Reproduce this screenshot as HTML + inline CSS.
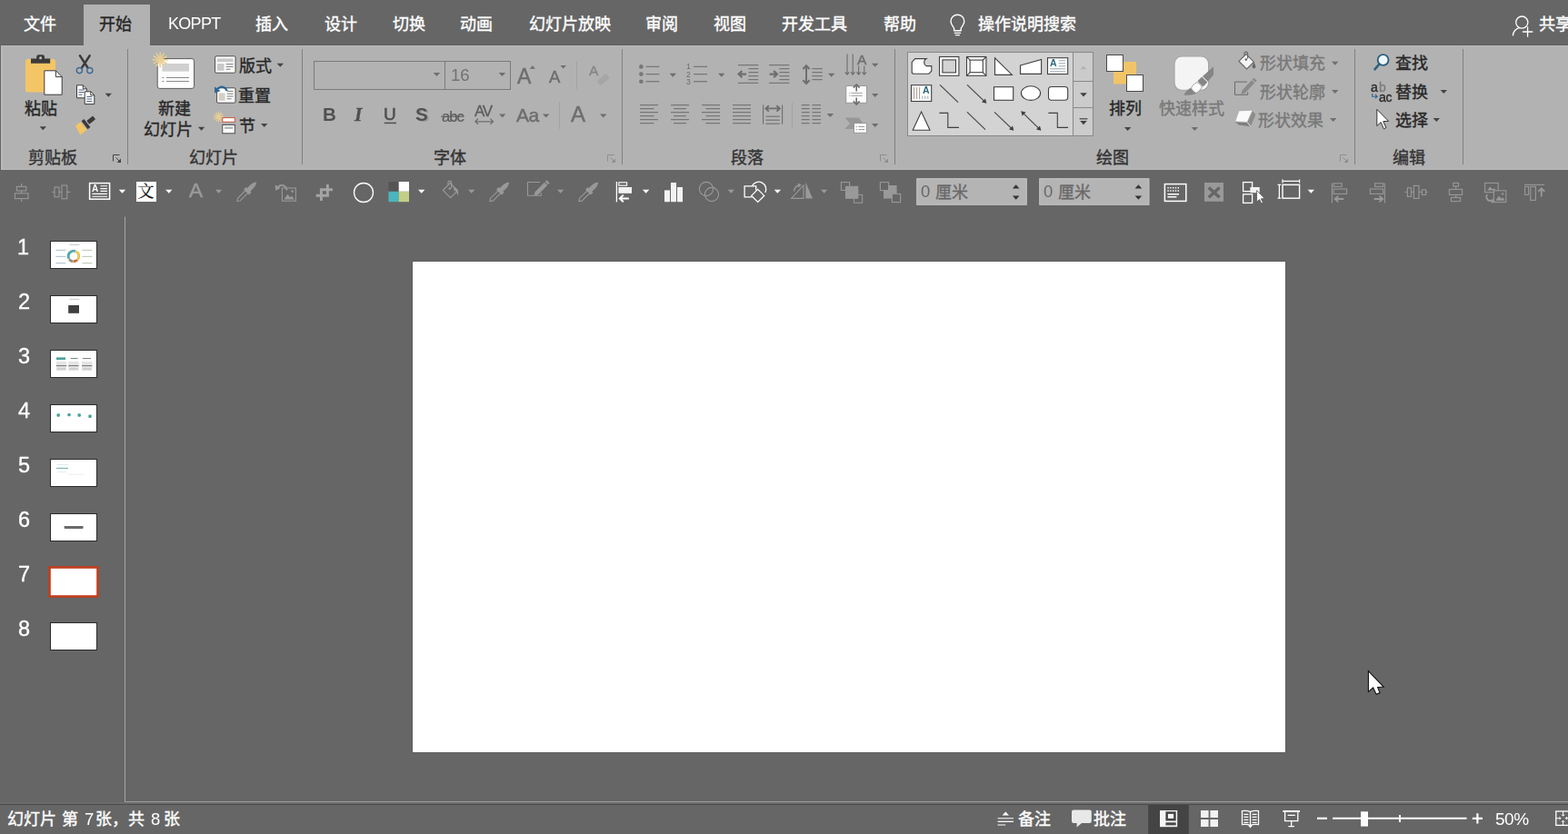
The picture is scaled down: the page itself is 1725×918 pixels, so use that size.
<!DOCTYPE html>
<html lang="zh-CN"><head><meta charset="utf-8"><title>PowerPoint</title>
<style>
html,body{margin:0;padding:0;}
body{width:1725px;height:918px;overflow:hidden;background:#666666;position:relative;font-family:"Liberation Sans",sans-serif;}
#app{position:absolute;left:0;top:0;width:1725px;height:918px;overflow:hidden;background:#666666;}
.abs{position:absolute;}
.cj{position:absolute;overflow:visible;display:block;z-index:3;}
.cj text{font-family:"Liberation Sans","Noto Sans CJK SC",sans-serif;font-size:1000px;}
.lt{position:absolute;line-height:1;white-space:pre;z-index:3;will-change:transform;}
.layer{position:absolute;left:0;top:0;overflow:visible;pointer-events:none;}
#tabbar{position:absolute;left:0;top:0;width:1725px;height:50px;background:#666666;}
#ribbon{position:absolute;left:1px;top:50px;width:1724px;height:137px;background:#b2b2b2;box-shadow:inset 2px 1px 0 #bababa, 0 -1px 0 #606060, 0 1.5px 0 #606060;}
#toolbar{position:absolute;left:0;top:187px;width:1725px;height:50px;background:#666666;}
#slide{position:absolute;left:454px;top:288px;width:960px;height:540px;background:#fff;box-shadow:0 0 0 1px #5e5e5e;}
</style></head><body>
<div id="app">
<div id="tabbar"><div class="abs" style="left:92px;top:5px;width:73px;height:46.2px;background:#b2b2b2;z-index:2"></div><svg class="cj " role="img" aria-label="文件" style="left:26.05px;top:17.46px;width:36.00px;height:18px;fill:#ffffff;stroke:#ffffff;stroke-width:20" viewBox="0 -880 2000 1000"><text x="0" y="0">文件</text></svg><svg class="cj " role="img" aria-label="开始" style="left:108.96px;top:17.37px;width:36.00px;height:18px;fill:#262626;stroke:#262626;stroke-width:20" viewBox="0 -880 2000 1000"><text x="0" y="0">开始</text></svg><svg class="cj " role="img" aria-label="插入" style="left:281.33px;top:17.39px;width:36.00px;height:18px;fill:#ffffff;stroke:#ffffff;stroke-width:20" viewBox="0 -880 2000 1000"><text x="0" y="0">插入</text></svg><svg class="cj " role="img" aria-label="设计" style="left:356.53px;top:17.35px;width:36.00px;height:18px;fill:#ffffff;stroke:#ffffff;stroke-width:20" viewBox="0 -880 2000 1000"><text x="0" y="0">设计</text></svg><svg class="cj " role="img" aria-label="切换" style="left:431.50px;top:17.41px;width:36.00px;height:18px;fill:#ffffff;stroke:#ffffff;stroke-width:20" viewBox="0 -880 2000 1000"><text x="0" y="0">切换</text></svg><svg class="cj " role="img" aria-label="动画" style="left:506.23px;top:17.26px;width:36.00px;height:18px;fill:#ffffff;stroke:#ffffff;stroke-width:20" viewBox="0 -880 2000 1000"><text x="0" y="0">动画</text></svg><svg class="cj " role="img" aria-label="幻灯片放映" style="left:581.76px;top:17.39px;width:90.00px;height:18px;fill:#ffffff;stroke:#ffffff;stroke-width:20" viewBox="0 -880 5000 1000"><text x="0" y="0">幻灯片放映</text></svg><svg class="cj " role="img" aria-label="审阅" style="left:710.01px;top:17.46px;width:36.00px;height:18px;fill:#ffffff;stroke:#ffffff;stroke-width:20" viewBox="0 -880 2000 1000"><text x="0" y="0">审阅</text></svg><svg class="cj " role="img" aria-label="视图" style="left:785.20px;top:17.37px;width:36.00px;height:18px;fill:#ffffff;stroke:#ffffff;stroke-width:20" viewBox="0 -880 2000 1000"><text x="0" y="0">视图</text></svg><svg class="cj " role="img" aria-label="开发工具" style="left:860.36px;top:17.40px;width:72.00px;height:18px;fill:#ffffff;stroke:#ffffff;stroke-width:20" viewBox="0 -880 4000 1000"><text x="0" y="0">开发工具</text></svg><svg class="cj " role="img" aria-label="帮助" style="left:971.60px;top:17.38px;width:36.00px;height:18px;fill:#ffffff;stroke:#ffffff;stroke-width:20" viewBox="0 -880 2000 1000"><text x="0" y="0">帮助</text></svg><svg class="cj " role="img" aria-label="操作说明搜索" style="left:1076.13px;top:17.35px;width:108.00px;height:18px;fill:#ffffff;stroke:#ffffff;stroke-width:20" viewBox="0 -880 6000 1000"><text x="0" y="0">操作说明搜索</text></svg><svg class="cj " role="img" aria-label="共享" style="left:1693.44px;top:17.45px;width:36.00px;height:18px;fill:#ffffff;stroke:#ffffff;stroke-width:20" viewBox="0 -880 2000 1000"><text x="0" y="0">共享</text></svg><span class="lt" style="left:185.20px;top:17.41px;font-size:18px;color:#ffffff;font-weight:normal;font-style:normal;font-family:'Liberation Sans',sans-serif;letter-spacing:-0.7px;">KOPPT</span><svg class="layer " width="1725" height="918" viewBox="0 0 1725 918"><g fill="none" stroke="#fff" stroke-width="1.4" stroke-linecap="round" stroke-linejoin="round"><path d="M1049.6 31.2c-1.2-2.3-3.6-4.2-3.6-7.6a7.4 7.4 0 0 1 14.8 0c0 3.4-2.4 5.3-3.6 7.6v2.6h-7.6z"/><path d="M1050.3 36.4h6.2M1051.4 38.6h4"/></g><g fill="none" stroke="#fff" stroke-width="1.3" stroke-linecap="round"><circle cx="1674.3" cy="24.6" r="6.6"/><path d="M1664.4 38.8c0.6-4.2 3.2-7.2 7-8.2"/><path d="M1675.4 35h10.4M1680.6 29.8v10.4"/></g></svg></div><div id="ribbon"></div><div class="abs" style="left:1px;top:185.5px;width:1724px;height:1.5px;background:#bababa"></div><svg class="cj " role="img" aria-label="剪贴板" style="left:30.60px;top:164.11px;width:54.00px;height:18px;fill:#333333;stroke:#333333;stroke-width:20" viewBox="0 -880 3000 1000"><text x="0" y="0">剪贴板</text></svg><svg class="cj " role="img" aria-label="幻灯片" style="left:208.36px;top:164.07px;width:54.00px;height:18px;fill:#333333;stroke:#333333;stroke-width:20" viewBox="0 -880 3000 1000"><text x="0" y="0">幻灯片</text></svg><svg class="cj " role="img" aria-label="字体" style="left:476.76px;top:164.17px;width:36.00px;height:18px;fill:#333333;stroke:#333333;stroke-width:20" viewBox="0 -880 2000 1000"><text x="0" y="0">字体</text></svg><svg class="cj " role="img" aria-label="段落" style="left:804.01px;top:164.12px;width:36.00px;height:18px;fill:#333333;stroke:#333333;stroke-width:20" viewBox="0 -880 2000 1000"><text x="0" y="0">段落</text></svg><svg class="cj " role="img" aria-label="绘图" style="left:1205.82px;top:164.12px;width:36.00px;height:18px;fill:#333333;stroke:#333333;stroke-width:20" viewBox="0 -880 2000 1000"><text x="0" y="0">绘图</text></svg><svg class="cj " role="img" aria-label="编辑" style="left:1531.62px;top:164.15px;width:36.00px;height:18px;fill:#333333;stroke:#333333;stroke-width:20" viewBox="0 -880 2000 1000"><text x="0" y="0">编辑</text></svg><svg class="cj " role="img" aria-label="粘贴" style="left:26.71px;top:109.59px;width:36.00px;height:18px;fill:#262626;stroke:#262626;stroke-width:20" viewBox="0 -880 2000 1000"><text x="0" y="0">粘贴</text></svg><svg class="cj " role="img" aria-label="新建" style="left:173.66px;top:109.74px;width:36.00px;height:18px;fill:#262626;stroke:#262626;stroke-width:20" viewBox="0 -880 2000 1000"><text x="0" y="0">新建</text></svg><svg class="cj " role="img" aria-label="幻灯片" style="left:157.76px;top:132.57px;width:54.00px;height:18px;fill:#262626;stroke:#262626;stroke-width:20" viewBox="0 -880 3000 1000"><text x="0" y="0">幻灯片</text></svg><svg class="cj " role="img" aria-label="版式" style="left:262.76px;top:62.57px;width:36.00px;height:18px;fill:#262626;stroke:#262626;stroke-width:20" viewBox="0 -880 2000 1000"><text x="0" y="0">版式</text></svg><svg class="cj " role="img" aria-label="重置" style="left:262.36px;top:95.62px;width:36.00px;height:18px;fill:#262626;stroke:#262626;stroke-width:20" viewBox="0 -880 2000 1000"><text x="0" y="0">重置</text></svg><svg class="cj " role="img" aria-label="节" style="left:263.01px;top:129.02px;width:18.00px;height:18px;fill:#262626;stroke:#262626;stroke-width:20" viewBox="0 -880 1000 1000"><text x="0" y="0">节</text></svg><span class="lt" style="left:496.00px;top:73.76px;font-size:18.5px;color:#727272;font-weight:normal;font-style:normal;font-family:'Liberation Sans',sans-serif;">16</span><span class="lt" style="left:568.60px;top:72.76px;font-size:23px;color:#6e6e6e;font-weight:normal;font-style:normal;font-family:'Liberation Sans',sans-serif;-webkit-text-stroke:0.45px #6e6e6e;">A</span><span class="lt" style="left:603.60px;top:76.36px;font-size:18.5px;color:#6e6e6e;font-weight:normal;font-style:normal;font-family:'Liberation Sans',sans-serif;-webkit-text-stroke:0.45px #6e6e6e;">A</span><span class="lt" style="left:648.20px;top:70.43px;font-size:15.5px;color:#858585;font-weight:normal;font-style:normal;font-family:'Liberation Sans',sans-serif;-webkit-text-stroke:0.35px #858585;">A</span><span class="lt" style="left:354.60px;top:116.29px;font-size:20.5px;color:#515151;font-weight:bold;font-style:normal;font-family:'Liberation Sans',sans-serif;">B</span><span class="lt" style="left:390.40px;top:115.80px;font-size:21.5px;color:#515151;font-weight:bold;font-style:italic;font-family:'Liberation Serif',sans-serif;-webkit-text-stroke:0.3px #515151;">I</span><span class="lt" style="left:422.20px;top:116.32px;font-size:19px;color:#515151;font-weight:normal;font-style:normal;font-family:'Liberation Sans',sans-serif;-webkit-text-stroke:0.6px #515151;">U</span><span class="lt" style="left:458.60px;top:117.29px;font-size:20.5px;color:#9a9a9a;font-weight:bold;font-style:normal;font-family:'Liberation Sans',sans-serif;">S</span><span class="lt" style="left:457.20px;top:116.29px;font-size:20.5px;color:#515151;font-weight:bold;font-style:normal;font-family:'Liberation Sans',sans-serif;">S</span><span class="lt" style="left:485.60px;top:120.14px;font-size:16.5px;color:#5c5c5c;font-weight:normal;font-style:normal;font-family:'Liberation Sans',sans-serif;letter-spacing:-0.9px;-webkit-text-stroke:0.2px #5c5c5c;">abc</span><span class="lt" style="left:521.60px;top:114.10px;font-size:17px;color:#5c5c5c;font-weight:normal;font-style:normal;font-family:'Liberation Sans',sans-serif;letter-spacing:-1.3px;-webkit-text-stroke:0.3px #5c5c5c;">AV</span><span class="lt" style="left:568.40px;top:116.14px;font-size:21px;color:#6e6e6e;font-weight:normal;font-style:normal;font-family:'Liberation Sans',sans-serif;letter-spacing:-0.6px;-webkit-text-stroke:0.45px #6e6e6e;">Aa</span><span class="lt" style="left:628.00px;top:113.68px;font-size:24px;color:#6e6e6e;font-weight:normal;font-style:normal;font-family:'Liberation Sans',sans-serif;-webkit-text-stroke:0.5px #6e6e6e;">A</span><svg class="layer " width="1725" height="918" viewBox="0 0 1725 918"><path d="M140.5 54V181" stroke="#808080" stroke-width="1"/><path d="M332.5 54V181" stroke="#808080" stroke-width="1"/><path d="M684.5 54V181" stroke="#808080" stroke-width="1"/><path d="M984.5 54V181" stroke="#808080" stroke-width="1"/><path d="M1490.5 54V181" stroke="#808080" stroke-width="1"/><path d="M1609.5 54V181" stroke="#808080" stroke-width="1"/><g fill="none" stroke="#444" stroke-width="1"><path d="M131.5 170.5H124.5V177.5"/><path d="M127.5 173.5L132.5 178.5"/></g><path d="M133 174.6V179H128.6z" fill="#444"/><g fill="none" stroke="#8e8e8e" stroke-width="1"><path d="M675.5 170.5H668.5V177.5"/><path d="M671.5 173.5L676.5 178.5"/></g><path d="M677 174.6V179H672.6z" fill="#8e8e8e"/><g fill="none" stroke="#8e8e8e" stroke-width="1"><path d="M975.5 170.5H968.5V177.5"/><path d="M971.5 173.5L976.5 178.5"/></g><path d="M977 174.6V179H972.6z" fill="#8e8e8e"/><g fill="none" stroke="#8e8e8e" stroke-width="1"><path d="M1481.5 170.5H1474.5V177.5"/><path d="M1477.5 173.5L1482.5 178.5"/></g><path d="M1483 174.6V179H1478.6z" fill="#8e8e8e"/><rect x="28" y="65" width="33" height="36.5" rx="2.5" fill="#f3c565"/><path d="M34 64.600h6.200v-2a2.400 2.400 0 0 1 2.400-2.400h4a2.400 2.400 0 0 1 2.400 2.400v2h6.200v5.200H34z" fill="#3b3b3b"/><circle cx="44.600" cy="63.800" r="1.500" fill="#c9c2b0"/><path d="M48.8 77.8h12.6l6.8 6.8v19.6H48.8z" fill="#fff" stroke="#3b3b3b" stroke-width="1"/><path d="M61.4 77.8v6.8h6.8" fill="none" stroke="#3b3b3b" stroke-width="1"/><path d="M43.60 139.30h7.4l-3.70 4z" fill="#444"/><g fill="none" stroke-linecap="round"><path d="M88 61.4L96.6 74.6M98.6 61.4L90 74.6" stroke="#3b3b3b" stroke-width="2.600"/><circle cx="87.4" cy="77.6" r="3.1" stroke="#3f6a94" stroke-width="1.400"/><circle cx="98.8" cy="77.6" r="3.1" stroke="#3f6a94" stroke-width="1.400"/></g><path d="M84.5 93.8h6.800000000000001l4 4v10h-10.8z" fill="#fff" stroke="#3b3b3b" stroke-width="1"/><path d="M91.3 93.8v4h4" fill="none" stroke="#3b3b3b" stroke-width="1"/><path d="M86.5 99h6M86.5 101.6h6M86.5 104.2h4" stroke="#4a5f78" stroke-width="1"/><path d="M93.2 100.8h6.6l4 4v9.8h-10.6z" fill="#fff" stroke="#3b3b3b" stroke-width="1"/><path d="M99.8 100.8v4h4" fill="none" stroke="#3b3b3b" stroke-width="1"/><path d="M95.4 106.4h6M95.4 109h6M95.4 111.6h6" stroke="#4a5f78" stroke-width="1"/><path d="M115.60 102.70h7.4l-3.70 4z" fill="#444"/><g transform="translate(94 137) rotate(-38)"><rect x="3.5" y="-2.4" width="8.8" height="4.8" rx="0.8" fill="#3b3b3b"/><rect x="-1.2" y="-5.6" width="3.6" height="11.2" fill="#3b3b3b"/><path d="M-2.4 -5.6h-7.2l-2 11.2h9.2z" fill="#f3c565"/></g><rect x="173.2" y="64.6" width="40.4" height="32.8" rx="2.5" fill="#fdfdfd" stroke="#5a5a5a" stroke-width="1"/><rect x="178.4" y="70" width="29.6" height="8.6" fill="#d0d0d0"/><path d="M178.4 85.5h2M183 85.5h25M178.4 89.5h2M183 89.5h25" stroke="#8a8a8a" stroke-width="1"/><path d="M168.40 65.80L184.00 65.80M169.45 61.90L182.95 69.70M172.30 59.05L180.10 72.55M176.20 58.00L176.20 73.60M180.10 59.05L172.30 72.55M182.95 61.90L169.45 69.70" stroke="#e9cf92" stroke-width="1.7" stroke-linecap="round" opacity="0.95" fill="none"/><path d="M217.90 139.80h7.4l-3.70 4z" fill="#444"/><rect x="236.6" y="61.8" width="22.4" height="18.4" rx="1.4" fill="#fdfdfd" stroke="#4a4a4a" stroke-width="1"/><rect x="239" y="64.4" width="17.6" height="3.8" fill="#c9c9c9"/><rect x="239" y="70" width="7.6" height="7.8" fill="#c9c9c9"/><path d="M248.6 70.6h8M248.6 73.4h8M248.6 76.2h5" stroke="#7a7a7a" stroke-width="1"/><path d="M304.60 69.80h7.4l-3.70 4z" fill="#444"/><rect x="238.6" y="96.8" width="20.4" height="16.4" rx="1.2" fill="#fdfdfd" stroke="#4a4a4a" stroke-width="1"/><rect x="240.6" y="102.4" width="7" height="8.4" fill="#d3cfc9"/><path d="M249.6 100.4h7M249.6 103.2h7M249.6 106h7M249.6 108.8h5" stroke="#7a7a7a" stroke-width="1"/><path d="M249.6 100c-1-3.4-4.6-5.2-8-3.8c-1.7 0.7-2.9 2-3.6 3.6" fill="none" stroke="#2f6593" stroke-width="2.2"/><path d="M236 95.4l0.2 7 6.4-2.4z" fill="#2f6593"/><path d="M235.40 128.60L245.80 128.60M236.10 126.00L245.10 131.20M238.00 124.10L243.20 133.10M240.60 123.40L240.60 133.80M243.20 124.10L238.00 133.10M245.10 126.00L236.10 131.20" stroke="#e9cf92" stroke-width="1.3" stroke-linecap="round" opacity="0.9" fill="none"/><rect x="244.8" y="129.6" width="13.6" height="4.6" fill="#fff" stroke="#c8553d" stroke-width="1"/><rect x="244.8" y="137.4" width="13.6" height="9.4" fill="#fff" stroke="#4a4a4a" stroke-width="1"/><rect x="247" y="139.4" width="9.2" height="2.6" fill="#b4bcbc"/><path d="M287.00 136.00h7.4l-3.70 4z" fill="#444"/><rect x="345.5" y="67.5" width="216" height="31" fill="none" stroke="#7a7a7a" stroke-width="1"/><path d="M489.5 67.5v31" stroke="#7a7a7a" stroke-width="1"/><path d="M476.70 80.00h7.4l-3.70 4z" fill="#6e6e6e"/><path d="M548.70 80.00h7.4l-3.70 4z" fill="#6e6e6e"/><path d="M582.60 75.80h6.4l-3.20 -3.6z" fill="#6e6e6e"/><path d="M616.50 72.00h6.4l-3.20 3.6z" fill="#6e6e6e"/><path d="M634.5 67.5V98" stroke="#a3a3a3" stroke-width="1"/><g transform="translate(663.5 87.5) rotate(-40)"><rect x="-6.5" y="-3" width="13" height="6.4" rx="1" fill="#a6a6a6"/></g><path d="M422.6 135.4h13.4" stroke="#515151" stroke-width="1.5"/><path d="M485 128.2h25.6" stroke="#5c5c5c" stroke-width="1.1"/><path d="M523 133.800h19.400M526 130.800l-3.200 3 3.200 3M539.400 130.800l3.200 3-3.200 3" fill="none" stroke="#6e6e6e" stroke-width="1.2"/><path d="M549.00 125.50h7.4l-3.70 4z" fill="#6e6e6e"/><path d="M597.00 125.50h7.4l-3.70 4z" fill="#6e6e6e"/><path d="M615.5 112.5V142" stroke="#a3a3a3" stroke-width="1"/><path d="M660.00 125.50h7.4l-3.70 4z" fill="#6e6e6e"/></svg><span class="lt" style="left:755.40px;top:69.40px;font-size:8.6px;color:#6e6e6e;font-weight:normal;font-style:normal;font-family:'Liberation Sans',sans-serif;">1</span><span class="lt" style="left:755.40px;top:77.60px;font-size:8.6px;color:#6e6e6e;font-weight:normal;font-style:normal;font-family:'Liberation Sans',sans-serif;">2</span><span class="lt" style="left:755.40px;top:85.70px;font-size:8.6px;color:#6e6e6e;font-weight:normal;font-style:normal;font-family:'Liberation Sans',sans-serif;">3</span><span class="lt" style="left:942.60px;top:57.63px;font-size:15.5px;color:#6e6e6e;font-weight:normal;font-style:normal;font-family:'Liberation Sans',sans-serif;-webkit-text-stroke:0.4px #6e6e6e;">A</span><span class="lt" style="left:1155.20px;top:64.47px;font-size:10.5px;color:#2b667a;font-weight:bold;font-style:normal;font-family:'Liberation Sans',sans-serif;">A</span><span class="lt" style="left:1014.80px;top:94.47px;font-size:10.5px;color:#2b667a;font-weight:bold;font-style:normal;font-family:'Liberation Sans',sans-serif;">A</span><svg class="cj " role="img" aria-label="排列" style="left:1219.54px;top:109.95px;width:36.00px;height:18px;fill:#262626;stroke:#262626;stroke-width:20" viewBox="0 -880 2000 1000"><text x="0" y="0">排列</text></svg><svg class="cj " role="img" aria-label="快速样式" style="left:1275.00px;top:109.99px;width:72.00px;height:18px;fill:#787878;stroke:#787878;stroke-width:20" viewBox="0 -880 4000 1000"><text x="0" y="0">快速样式</text></svg><svg class="cj " role="img" aria-label="形状填充" style="left:1386.03px;top:60.28px;width:72.00px;height:18px;fill:#787878;stroke:#787878;stroke-width:20" viewBox="0 -880 4000 1000"><text x="0" y="0">形状填充</text></svg><svg class="cj " role="img" aria-label="形状轮廓" style="left:1386.03px;top:92.00px;width:72.00px;height:18px;fill:#787878;stroke:#787878;stroke-width:20" viewBox="0 -880 4000 1000"><text x="0" y="0">形状轮廓</text></svg><svg class="cj " role="img" aria-label="形状效果" style="left:1384.33px;top:122.65px;width:72.00px;height:18px;fill:#787878;stroke:#787878;stroke-width:20" viewBox="0 -880 4000 1000"><text x="0" y="0">形状效果</text></svg><svg class="cj " role="img" aria-label="查找" style="left:1535.05px;top:60.34px;width:36.00px;height:18px;fill:#262626;stroke:#262626;stroke-width:20" viewBox="0 -880 2000 1000"><text x="0" y="0">查找</text></svg><span class="lt" style="left:1508.40px;top:88.56px;font-size:14px;color:#2a2a2a;font-weight:normal;font-style:normal;font-family:'Liberation Sans',sans-serif;-webkit-text-stroke:0.35px #2a2a2a;">a</span><span class="lt" style="left:1517.00px;top:88.56px;font-size:14px;color:#7c7c7c;font-weight:normal;font-style:normal;font-family:'Liberation Sans',sans-serif;-webkit-text-stroke:0.3px #7c7c7c;">b</span><span class="lt" style="left:1516.60px;top:99.56px;font-size:14px;color:#2a2a2a;font-weight:normal;font-style:normal;font-family:'Liberation Sans',sans-serif;letter-spacing:-0.3px;-webkit-text-stroke:0.35px #2a2a2a;">ac</span><svg class="cj " role="img" aria-label="替换" style="left:1534.93px;top:92.01px;width:36.00px;height:18px;fill:#262626;stroke:#262626;stroke-width:20" viewBox="0 -880 2000 1000"><text x="0" y="0">替换</text></svg><svg class="cj " role="img" aria-label="选择" style="left:1534.89px;top:122.67px;width:36.00px;height:18px;fill:#262626;stroke:#262626;stroke-width:20" viewBox="0 -880 2000 1000"><text x="0" y="0">选择</text></svg><svg class="layer " width="1725" height="918" viewBox="0 0 1725 918"><circle cx="705.4" cy="73.4" r="2.3" fill="#767676"/><path d="M710.6 73.4H725.4" stroke="#767676" stroke-width="1.25"/><circle cx="705.4" cy="81.6" r="2.3" fill="#767676"/><path d="M710.6 81.6H725.4" stroke="#767676" stroke-width="1.25"/><circle cx="705.4" cy="89.7" r="2.3" fill="#767676"/><path d="M710.6 89.7H725.4" stroke="#767676" stroke-width="1.25"/><path d="M736.60 80.70h7.4l-3.70 4z" fill="#6e6e6e"/><path d="M763 73.4H778" stroke="#767676" stroke-width="1.25"/><path d="M763 81.6H778" stroke="#767676" stroke-width="1.25"/><path d="M763 89.7H778" stroke="#767676" stroke-width="1.25"/><path d="M790.00 80.70h7.4l-3.70 4z" fill="#6e6e6e"/><path d="M812 71.6H834.2" stroke="#767676" stroke-width="1.25"/><path d="M823.4 75.6H834.2" stroke="#767676" stroke-width="1.25"/><path d="M823.4 79.6H834.2" stroke="#767676" stroke-width="1.25"/><path d="M823.4 83.6H834.2" stroke="#767676" stroke-width="1.25"/><path d="M823.4 87.6H834.2" stroke="#767676" stroke-width="1.25"/><path d="M812 91.4H834.2" stroke="#767676" stroke-width="1.25"/><path d="M821 81.6h-8M816.4 78l-3.8 3.6 3.8 3.6" fill="none" stroke="#6e6e6e" stroke-width="2.2"/><path d="M846 71.6H868.4" stroke="#767676" stroke-width="1.25"/><path d="M857.4 75.6H868.4" stroke="#767676" stroke-width="1.25"/><path d="M857.4 79.6H868.4" stroke="#767676" stroke-width="1.25"/><path d="M857.4 83.6H868.4" stroke="#767676" stroke-width="1.25"/><path d="M857.4 87.6H868.4" stroke="#767676" stroke-width="1.25"/><path d="M846 91.4H868.4" stroke="#767676" stroke-width="1.25"/><path d="M846.6 81.6h8M851.2 78l3.8 3.6-3.8 3.6" fill="none" stroke="#6e6e6e" stroke-width="2.2"/><path d="M887 72.4V91.8M883.4 76l3.6-3.8 3.6 3.8M883.4 88.2l3.6 3.8 3.6-3.8" fill="none" stroke="#6e6e6e" stroke-width="2"/><path d="M893.4 75.6H904.8" stroke="#767676" stroke-width="1.25"/><path d="M893.4 79.6H904.8" stroke="#767676" stroke-width="1.25"/><path d="M893.4 83.6H904.8" stroke="#767676" stroke-width="1.25"/><path d="M893.4 87.6H904.8" stroke="#767676" stroke-width="1.25"/><path d="M911.00 80.70h7.4l-3.70 4z" fill="#6e6e6e"/><path d="M932 59.4V82M929.8 79.4l2.2 2.8 2.2-2.8" fill="none" stroke="#6e6e6e" stroke-width="1.1"/><path d="M938.2 59.4V82M936.0 79.4l2.2 2.8 2.2-2.8" fill="none" stroke="#6e6e6e" stroke-width="1.1"/><path d="M944.6 72.5V82M942.4 79.4l2.2 2.8 2.2-2.8" fill="none" stroke="#6e6e6e" stroke-width="1.1"/><path d="M950.8 72.5V82M948.5999999999999 79.4l2.2 2.8 2.2-2.8" fill="none" stroke="#6e6e6e" stroke-width="1.1"/><path d="M959.00 69.70h7.4l-3.70 4z" fill="#6e6e6e"/><rect x="930.8" y="94.6" width="22.8" height="18.6" fill="#fbfbfb" stroke="#8a8a8a" stroke-width="0.8"/><path d="M942.2 93.4v7.2M938.8 96.6l3.4-3.6 3.4 3.6M942.2 114.6v-7.2M938.8 111.4l3.4 3.6 3.4-3.6" fill="none" stroke="#6e6e6e" stroke-width="1.6"/><path d="M936.4 102.4H948.8" stroke="#9a9a9a" stroke-width="0.9"/><path d="M936.4 105.4H948.8" stroke="#9a9a9a" stroke-width="0.9"/><path d="M934.2 102.4H935.4" stroke="#9a9a9a" stroke-width="0.9"/><path d="M934.2 105.4H935.4" stroke="#9a9a9a" stroke-width="0.9"/><path d="M959.00 103.00h7.4l-3.70 4z" fill="#6e6e6e"/><path d="M929.4 129.4h15.4l4.6 6.3-4.6 6.3h-15.4l5.6-6.3z" fill="#979797"/><rect x="939.6" y="135.6" width="14" height="10.6" fill="#fbfbfb" stroke="#8a8a8a" stroke-width="0.8"/><path d="M944.4 139.4H951" stroke="#8a8a8a" stroke-width="0.9"/><path d="M944.4 142.6H951" stroke="#8a8a8a" stroke-width="0.9"/><path d="M941.8 139.4H943" stroke="#8a8a8a" stroke-width="0.9"/><path d="M941.8 142.6H943" stroke="#8a8a8a" stroke-width="0.9"/><path d="M959.00 136.00h7.4l-3.70 4z" fill="#6e6e6e"/><path d="M704 115.6H724" stroke="#767676" stroke-width="1.25"/><path d="M704 119.6H719.4" stroke="#767676" stroke-width="1.25"/><path d="M704 123.6H724" stroke="#767676" stroke-width="1.25"/><path d="M704 127.6H719.4" stroke="#767676" stroke-width="1.25"/><path d="M704 131.6H724" stroke="#767676" stroke-width="1.25"/><path d="M704 135.6H719.4" stroke="#767676" stroke-width="1.25"/><path d="M738 115.6H758" stroke="#767676" stroke-width="1.25"/><path d="M741 119.6H755" stroke="#767676" stroke-width="1.25"/><path d="M738 123.6H758" stroke="#767676" stroke-width="1.25"/><path d="M741 127.6H755" stroke="#767676" stroke-width="1.25"/><path d="M738 131.6H758" stroke="#767676" stroke-width="1.25"/><path d="M741 135.6H755" stroke="#767676" stroke-width="1.25"/><path d="M772 115.6H792" stroke="#767676" stroke-width="1.25"/><path d="M776.4 119.6H792" stroke="#767676" stroke-width="1.25"/><path d="M772 123.6H792" stroke="#767676" stroke-width="1.25"/><path d="M776.4 127.6H792" stroke="#767676" stroke-width="1.25"/><path d="M772 131.6H792" stroke="#767676" stroke-width="1.25"/><path d="M776.4 135.6H792" stroke="#767676" stroke-width="1.25"/><path d="M806 115.6H826" stroke="#767676" stroke-width="1.25"/><path d="M806 119.6H826" stroke="#767676" stroke-width="1.25"/><path d="M806 123.6H826" stroke="#767676" stroke-width="1.25"/><path d="M806 127.6H826" stroke="#767676" stroke-width="1.25"/><path d="M806 131.6H826" stroke="#767676" stroke-width="1.25"/><path d="M806 135.6H826" stroke="#767676" stroke-width="1.25"/><path d="M839.6 115.4V136.8M860.6 115.4V136.8" stroke="#6e6e6e" stroke-width="1.1"/><path d="M842.4 119.4h15.4M845.8 116.2l-3.4 3.2 3.4 3.2M854.4 116.2l3.4 3.2-3.4 3.2" fill="none" stroke="#6e6e6e" stroke-width="1.9"/><path d="M842.4 128.2H857.8" stroke="#767676" stroke-width="1.25"/><path d="M842.4 132.2H857.8" stroke="#767676" stroke-width="1.25"/><path d="M842.4 136.2H857.8" stroke="#767676" stroke-width="1.25"/><path d="M871.5 112.5V142" stroke="#a3a3a3" stroke-width="1"/><path d="M881.8 115.6H890.6" stroke="#767676" stroke-width="1.25"/><path d="M893.4 115.6H903" stroke="#767676" stroke-width="1.25"/><path d="M881.8 119.6H890.6" stroke="#767676" stroke-width="1.25"/><path d="M893.4 119.6H903" stroke="#767676" stroke-width="1.25"/><path d="M881.8 123.6H890.6" stroke="#767676" stroke-width="1.25"/><path d="M893.4 123.6H903" stroke="#767676" stroke-width="1.25"/><path d="M881.8 127.6H890.6" stroke="#767676" stroke-width="1.25"/><path d="M893.4 127.6H903" stroke="#767676" stroke-width="1.25"/><path d="M881.8 131.6H890.6" stroke="#767676" stroke-width="1.25"/><path d="M893.4 131.6H903" stroke="#767676" stroke-width="1.25"/><path d="M881.8 135.6H890.6" stroke="#767676" stroke-width="1.25"/><path d="M893.4 135.6H903" stroke="#767676" stroke-width="1.25"/><path d="M909.70 125.00h7.4l-3.70 4z" fill="#6e6e6e"/><rect x="998.5" y="57.5" width="204" height="92" fill="#d3d3d3" stroke="#888888" stroke-width="1"/><rect x="1180.5" y="57.5" width="22" height="92" fill="#cbcbcb" stroke="#888888" stroke-width="1"/><path d="M1180.5 89.5h22M1180.5 118.5h22" stroke="#888888" stroke-width="1"/><path d="M1188.30 76.20h7.4l-3.70 -3.6z" fill="#b4b4b4"/><path d="M1188.20 102.30h7.6l-3.80 4.2z" fill="#404040"/><path d="M1187.6 130.8h8.8" stroke="#404040" stroke-width="1.2"/><path d="M1188.20 133.10h7.6l-3.80 4.2z" fill="#404040"/><path d="M1006.6 64.6h12.4a4.6 4.6 0 0 0 0 8h5.8v5.6l-3 3h-17.4l-1.2-1.2v-11.6z" fill="#fff" stroke="#404040" stroke-width="1.1" stroke-linejoin="miter"/><rect x="1033.5" y="62.5" width="21.4" height="20.8" fill="#fff" stroke="#404040" stroke-width="1.1" stroke-linejoin="miter"/><rect x="1036.9" y="65.9" width="14.6" height="14" fill="#d3d3d3" stroke="#404040" stroke-width="1.1"/><rect x="1063.5" y="62.5" width="21.4" height="20.8" fill="#fff" stroke="#404040" stroke-width="1.1" stroke-linejoin="miter"/><rect x="1067.1" y="66.1" width="14.2" height="13.6" fill="#fff" stroke="#404040" stroke-width="1.1" stroke-linejoin="miter"/><path d="M1063.5 62.5l3.6 3.6M1084.9 62.5l-3.6 3.6M1063.5 83.3l3.6-3.6M1084.9 83.3l-3.6-3.6" fill="none" stroke="#404040" stroke-width="1.1"/><path d="M1094.5 63.8V82.4H1113.4z" fill="#fff" stroke="#404040" stroke-width="1.1" stroke-linejoin="miter"/><path d="M1122.5 72L1145.6 65.4V81.4H1122.5z" fill="#fff" stroke="#404040" stroke-width="1.1" stroke-linejoin="miter"/><rect x="1152.5" y="63.7" width="22.2" height="17.8" fill="#fff" stroke="#404040" stroke-width="1.1" stroke-linejoin="miter"/><path d="M1164.6 66.8h7.6M1164.6 69.8h7.6M1164.6 72.8h7.6M1155 75.8h17.2M1155 78.8h17.2" stroke="#8c9aa0" stroke-width="0.9"/><rect x="1002.5" y="93.7" width="22.2" height="17.8" fill="#fff" stroke="#404040" stroke-width="1.1" stroke-linejoin="miter"/><path d="M1005.6 96v13M1008.6 96v13M1011.6 96v13" stroke="#9a8c80" stroke-width="0.9"/><path d="M1014.8 105.6v3.6M1017.8 105.6v3.6M1020.8 105.6v3.6" stroke="#8c9aa0" stroke-width="0.9"/><path d="M1034 93.4L1054 112.6" fill="none" stroke="#404040" stroke-width="1.1"/><path d="M1064 93.4L1084.4 112.8" fill="none" stroke="#404040" stroke-width="1.1"/><path d="M1085.4 113.8l-5.4-1.4 4-4z" fill="#404040"/><rect x="1093.5" y="95.7" width="21.2" height="14.6" fill="#fff" stroke="#404040" stroke-width="1.1" stroke-linejoin="miter"/><ellipse cx="1134" cy="102.6" rx="10.6" ry="7.8" fill="#fff" stroke="#404040" stroke-width="1.1" stroke-linejoin="miter"/><rect x="1153.5" y="95.5" width="21.2" height="14.8" rx="3.2" fill="#fff" stroke="#404040" stroke-width="1.1" stroke-linejoin="miter"/><path d="M1013.6 123L1023 143.2H1004.2z" fill="#fff" stroke="#404040" stroke-width="1.1" stroke-linejoin="miter"/><path d="M1033.4 124.4h9.4v16h12.2" fill="none" stroke="#404040" stroke-width="1.1"/><path d="M1064 123.4L1084 142.6" fill="none" stroke="#404040" stroke-width="1.1"/><path d="M1094 123.4L1114.4 142.8" fill="none" stroke="#404040" stroke-width="1.1"/><path d="M1115.4 143.8l-5.4-1.4 4-4z" fill="#404040"/><path d="M1124.4 123.4L1144.4 142.8" fill="none" stroke="#404040" stroke-width="1.1"/><path d="M1145.4 143.8l-5.4-1.4 4-4z" fill="#404040"/><path d="M1123.2 122.2l5.4 1.4-4 4z" fill="#404040"/><path d="M1153.4 124.4h9.9v16h11.8" fill="none" stroke="#404040" stroke-width="1.1"/><rect x="1225" y="68" width="25" height="24.6" fill="#f1c468"/><rect x="1217.5" y="60.5" width="18" height="18" fill="#fff" stroke="#4a4a4a" stroke-width="1"/><rect x="1239.5" y="82.5" width="18" height="18" fill="#fff" stroke="#4a4a4a" stroke-width="1"/><path d="M1236.90 140.00h7.4l-3.70 4z" fill="#444"/><rect x="1292" y="62" width="37.6" height="37.2" rx="8" fill="#f4f4f4" stroke="#a2a2a2" stroke-width="1.1"/><path d="M1302.300 104.700Q1304.600 99.600 1309.900 96.700L1316.100 102.900Q1309 105.400 1302.300 104.700Z" fill="#858585"/><g transform="translate(1316.5 96.3) rotate(-45)"><rect x="-5.400" y="-4.500" width="10.400" height="9" rx="3" fill="#fbfbfb" stroke="#8f8f8f" stroke-width="0.800"/><rect x="5.600" y="-4.300" width="6.800" height="8.600" fill="#858585"/><path d="M13.300 -4.100L29.400 -3.200L22.960 3.200L13.300 4.100z" fill="#858585"/></g><path d="M1310.60 140.00h7.4l-3.70 4z" fill="#6e6e6e"/><g fill="none" stroke="#6a6a6a" stroke-width="1.2"><path d="M1363 67.400l7.800-7.800 8.600 8.600-7.800 7.800z" fill="#f4f4f4"/><path d="M1369 61.600v-2.600a1.800 1.800 0 0 1 3.600 0v5.600"/></g><circle cx="1370.800" cy="65.600" r="1.300" fill="#6a6a6a"/><path d="M1379.400 68.200c1 2.400 2 3.600 2 5.200a1.900 1.900 0 0 1-3.800 0c0-1.600 1-2.800 1.800-5.200z" fill="#6a6a6a"/><path d="M1465.00 67.80h7.4l-3.70 4z" fill="#6e6e6e"/><path d="M1372 90.100h-13.500v14.200h14.200v-3" fill="none" stroke="#6a6a6a" stroke-width="1"/><g transform="translate(1365.400 104) rotate(-47)"><path d="M0 0l4-2.200h15.400v4.400h-15.400z" fill="#8a8a8a"/><rect x="20.400" y="-2.200" width="2.600" height="4.400" fill="#8a8a8a"/></g><path d="M1465.00 98.90h7.4l-3.70 4z" fill="#6e6e6e"/><path d="M1377.500 121.400L1381.300 126.300L1375.900 139.300L1372 134.400Z" fill="#8c8c8c"/><path d="M1359 133.900L1372 134.400L1375.900 139.300L1362.600 137.400Z" fill="#7e7e7e"/><path d="M1363.600 121.900L1376.700 121.400a0.800 0.800 0 0 1 0.800 1.100L1372.300 134a0.800 0.800 0 0 1-0.800 0.400L1359.800 133.900a0.800 0.800 0 0 1-0.600-1.100L1362.800 122.400z" fill="#fafafa" stroke="#a8a8a8" stroke-width="0.600"/><path d="M1372.200 134.600L1375.700 139" stroke="#f0f0f0" stroke-width="0.900"/><path d="M1463.00 129.90h7.4l-3.70 4z" fill="#6e6e6e"/><circle cx="1521.600" cy="66" r="5.900" fill="#eef6fb" stroke="#2c5f7c" stroke-width="1.900"/><path d="M1517.400 70.600l-5 5.800" stroke="#2c5f7c" stroke-width="2.400" stroke-linecap="round"/><path d="M1509.600 103v3.200h5.400M1512.800 104l2.400 2.200-2.400 2.200" fill="none" stroke="#2f6593" stroke-width="1.100"/><path d="M1584.60 98.90h7.4l-3.70 4z" fill="#444"/><path d="M1514.800 120.400v18.200l4.300-4 3.200 7.200 2.600-1.200-3.100-7 5.800-0.300z" fill="#fff" stroke="#333" stroke-width="1" stroke-linejoin="round"/><path d="M1576.60 129.90h7.4l-3.70 4z" fill="#444"/></svg><div id="toolbar"></div><span class="lt" style="left:101.00px;top:202.92px;font-size:10px;color:#fff;font-weight:bold;font-style:normal;font-family:'Liberation Sans',sans-serif;">A</span><svg class="cj " role="img" aria-label="文" style="left:151.40px;top:201.35px;width:18.60px;height:18.6px;fill:#111;stroke:#111;stroke-width:6" viewBox="0 -880 1000 1000"><text x="0" y="0" style="font-family:'Liberation Serif','Noto Serif CJK SC',serif;">文</text></svg><span class="lt" style="left:207.80px;top:199.11px;font-size:22.5px;color:#999999;font-weight:normal;font-style:normal;font-family:'Liberation Sans',sans-serif;-webkit-text-stroke:0.65px #999999;">A</span><span class="lt" style="left:1013.30px;top:202.36px;font-size:18.5px;color:#686868;font-weight:normal;font-style:normal;font-family:'Liberation Sans',sans-serif;">0</span><svg class="cj " role="img" aria-label="厘米" style="left:1029.35px;top:202.29px;width:36.00px;height:18px;fill:#686868;stroke:#686868;stroke-width:20" viewBox="0 -880 2000 1000"><text x="0" y="0">厘米</text></svg><span class="lt" style="left:1148.30px;top:202.36px;font-size:18.5px;color:#686868;font-weight:normal;font-style:normal;font-family:'Liberation Sans',sans-serif;">0</span><svg class="cj " role="img" aria-label="厘米" style="left:1164.35px;top:202.29px;width:36.00px;height:18px;fill:#686868;stroke:#686868;stroke-width:20" viewBox="0 -880 2000 1000"><text x="0" y="0">厘米</text></svg><svg class="layer " width="1725" height="918" viewBox="0 0 1725 918"><path d="M23.6 202V222" stroke="#999999" stroke-width="1.1"/><rect x="18.4" y="205.4" width="10.40" height="4.60" fill="#666666" stroke="#999999" stroke-width="1.1"/><rect x="16.4" y="212.8" width="14.60" height="5.80" fill="#666666" stroke="#999999" stroke-width="1.1"/><path d="M57.4 211.4H77.4" stroke="#999999" stroke-width="1.1"/><rect x="60" y="206" width="5.00" height="10.80" fill="#666666" stroke="#999999" stroke-width="1.1"/><rect x="68" y="204" width="5.80" height="14.80" fill="#666666" stroke="#999999" stroke-width="1.1"/><rect x="98.6" y="201.6" width="22.00" height="17.60" fill="none" stroke="#fff" stroke-width="1.5"/><path d="M110.400 204.800h7.600M110.400 207.600h7.600M110.400 210.400h7.600M101.400 213.400h16.600M101.400 216.200h16.600" stroke="#fff" stroke-width="1.1"/><path d="M130.80 208.80h7.4l-3.70 4z" fill="#fff"/><rect x="150" y="200" width="22" height="22" fill="#fff"/><path d="M182.10 208.80h7.4l-3.70 4z" fill="#fff"/><path d="M236.90 208.80h7.4l-3.70 4z" fill="#999999"/><g transform="translate(260.6 221.8) rotate(-45)" fill="none" stroke="#999999" stroke-width="1.1"><path d="M0.500 0l2.600-1.900h13.400v3.800h-13.400z"/><rect x="15.200" y="-3.600" width="2.600" height="7.200" fill="#999999"/><path d="M17.800 -2h4.600c3.400 0 5.400 0.400 7 2c-1.600 1.600-3.600 2-7 2h-4.600z" fill="#999999"/></g><rect x="310.4" y="207" width="15.00" height="14.20" fill="none" stroke="#999999" stroke-width="1.1"/><path d="M312.400 219.400l4-5.600 2.800 3.400 1.800-1.800 2.800 4z" fill="#999999"/><circle cx="321.600" cy="210.600" r="1.300" fill="#999999"/><path d="M315.400 209.600c0-3.800-3-6-6.200-5.600c-2 0.300-3.400 1.400-4.200 3" fill="none" stroke="#999999" stroke-width="1.800"/><path d="M302.600 203.400l0.600 6.400 5.600-2.800z" fill="#999999"/><path d="M353.400 207.200V220.900M351.900 208.700H366.100M360.400 202.900V216.600M347.700 215.200H361.900" fill="none" stroke="#a4a4a4" stroke-width="2.900"/><circle cx="400" cy="212" r="10.500" fill="none" stroke="#fff" stroke-width="1.300"/><rect x="427.400" y="200" width="11.300" height="10.800" fill="#555555"/><rect x="438.700" y="200" width="11.300" height="10.800" fill="#ffffff"/><rect x="427.400" y="210.800" width="11.300" height="11.400" fill="#4bb4bd"/><rect x="438.700" y="210.800" width="11.300" height="11.400" fill="#c3cf86"/><path d="M460.00 208.80h7.4l-3.70 4z" fill="#fff"/><g fill="none" stroke="#999999" stroke-width="1.200"><path d="M487.400 209.400l7.800-7.800 8.200 8.200-7.800 7.800z"/><path d="M493 203.800v-2.800a1.800 1.800 0 0 1 3.600 0v6"/></g><circle cx="494.800" cy="207.600" r="1.300" fill="#999999"/><path d="M499 205.400c3 1 4.800 3 5.200 6.600l-0.400 3.800c-0.600-3.400-2.400-5.600-4.600-6.800z" fill="#999999"/><path d="M515.00 208.80h7.4l-3.70 4z" fill="#999999"/><g transform="translate(538.6 222) rotate(-45)" fill="none" stroke="#999999" stroke-width="1.1"><path d="M0.500 0l2.600-1.900h13.400v3.800h-13.400z"/><rect x="15.200" y="-3.600" width="2.600" height="7.200" fill="#999999"/><path d="M17.800 -2h4.600c3.400 0 5.400 0.400 7 2c-1.600 1.600-3.600 2-7 2h-4.600z" fill="#999999"/></g><path d="M594 200.500h-13.500v14.800h14.800v-3" fill="none" stroke="#999999" stroke-width="1.100"/><g transform="translate(587.400 215.600) rotate(-45)"><path d="M0 0l4-2.300h14.600v4.600h-14.600z" fill="#999999"/><rect x="19.600" y="-2.300" width="2.600" height="4.600" fill="#999999"/></g><path d="M613.00 208.80h7.4l-3.70 4z" fill="#999999"/><g transform="translate(636.6 222) rotate(-45)" fill="none" stroke="#999999" stroke-width="1.1"><path d="M0.500 0l2.600-1.900h13.400v3.800h-13.400z"/><rect x="15.200" y="-3.600" width="2.600" height="7.200" fill="#999999"/><path d="M17.800 -2h4.600c3.400 0 5.400 0.400 7 2c-1.600 1.600-3.600 2-7 2h-4.600z" fill="#999999"/></g><path d="M678.400 200V222.400" stroke="#fff" stroke-width="1.300"/><rect x="680.8" y="200.8" width="8.80" height="3.40" fill="none" stroke="#fff" stroke-width="1.1"/><rect x="680.400" y="206" width="14.600" height="6.800" fill="#f2f2f2"/><path d="M681.800 218.400h10M685.800 214.600l-4 3.800 4 3.800" fill="none" stroke="#fff" stroke-width="2"/><path d="M706.90 208.80h7.4l-3.70 4z" fill="#fff"/><rect x="731" y="209.400" width="6" height="12.800" fill="#f2f2f2"/><rect x="738" y="201" width="6" height="21.200" fill="#f2f2f2"/><rect x="745" y="206" width="6" height="16.200" fill="#f2f2f2"/><circle cx="777" cy="208" r="7.600" fill="none" stroke="#999999" stroke-width="1.100"/><circle cx="783" cy="214" r="7.600" fill="none" stroke="#999999" stroke-width="1.100"/><path d="M800.60 208.80h7.4l-3.70 4z" fill="#999999"/><path d="M831.700 209.400v-4.600h-12.600v12h8.400" fill="none" stroke="#fff" stroke-width="1.300"/><path d="M827.400 204.600a8 8 0 1 1 14.400 7.400" fill="none" stroke="#fff" stroke-width="1.300"/><path d="M833.700 208.400l7 7-7 7-7-7z" fill="none" stroke="#fff" stroke-width="1.300"/><path d="M851.70 208.80h7.4l-3.70 4z" fill="#fff"/><path d="M884 204V218.400H870.600z" fill="none" stroke="#999999" stroke-width="1.100"/><path d="M886.400 200.800L894 218.600H886.400z" fill="#999999"/><path d="M873.400 210.600c0.400-3.600 2.600-6 6-6.600" fill="none" stroke="#999999" stroke-width="1.300"/><path d="M877.600 201.600l4.200 2-3.400 3z" fill="#999999"/><path d="M903.00 208.80h7.4l-3.70 4z" fill="#999999"/><rect x="925.4" y="200.6" width="9.20" height="8.80" fill="none" stroke="#999999" stroke-width="1.1"/><rect x="939.4" y="214.4" width="9.20" height="8.80" fill="none" stroke="#999999" stroke-width="1.1"/><rect x="930" y="204.800" width="14.300" height="14" fill="#999999"/><rect x="972" y="204" width="14.600" height="14.600" fill="#999999"/><rect x="968.4" y="200.6" width="9.20" height="9.00" fill="#666666" stroke="#999999" stroke-width="1.1"/><rect x="981.4" y="213.4" width="9.20" height="9.20" fill="#666666" stroke="#999999" stroke-width="1.1"/><rect x="1008.7" y="196.700" width="120.6" height="28.600" fill="#b4b4b4" stroke="#c6c6c6" stroke-width="1"/><path d="M1113.90 207.40h7.6l-3.80 -4.2z" fill="#333"/><path d="M1113.90 215.60h7.6l-3.80 4.2z" fill="#333"/><rect x="1143.7" y="196.700" width="120.3" height="28.600" fill="#b4b4b4" stroke="#c6c6c6" stroke-width="1"/><path d="M1248.60 207.40h7.6l-3.80 -4.2z" fill="#333"/><path d="M1248.60 215.60h7.6l-3.80 4.2z" fill="#333"/><rect x="1281.4" y="202.6" width="23.40" height="18.80" fill="none" stroke="#fff" stroke-width="1.5"/><path d="M1284.400 206.700h14" stroke="#fff" stroke-width="1.400" stroke-dasharray="1.400 1.400"/><path d="M1284.400 210h14" stroke="#fff" stroke-width="1.400" stroke-dasharray="1.400 1.400"/><path d="M1284.400 213.700h12.600M1284.400 216.800h10" stroke="#fff" stroke-width="1.400"/><rect x="1325" y="201" width="21" height="20.800" fill="#999999"/><path d="M1329.800 206.400L1341.600 217.200M1341.600 206.400L1329.800 217.200" stroke="#666" stroke-width="3.400"/><rect x="1367.6" y="200.6" width="10.00" height="10.00" fill="none" stroke="#fff" stroke-width="1.3"/><rect x="1367.6" y="213.8" width="10.00" height="9.60" fill="none" stroke="#fff" stroke-width="1.3"/><rect x="1375.400" y="206" width="10.300" height="6.200" fill="#f2f2f2"/><path d="M1382.600 209.600v12.600l3-2.600 2 4.400 1.800-0.800-2-4.400 3.800-0.200z" fill="#fff" stroke="#555" stroke-width="0.800"/><rect x="1411" y="203.4" width="18.60" height="14.80" fill="none" stroke="#fff" stroke-width="1.4"/><path d="M1411 199.400h18.600M1411 197.400v4M1429.600 197.400v4M1407.400 203.400v14.800M1405.600 203.400h3.600M1405.600 218.200h3.600" stroke="#fff" stroke-width="1.200"/><path d="M1438.60 208.80h7.4l-3.70 4z" fill="#fff"/><path d="M1465.400 201.400V223.400" stroke="#999999" stroke-width="1.100"/><rect x="1467.2" y="201.8" width="9.00" height="3.60" fill="none" stroke="#999999" stroke-width="1.1"/><rect x="1467.2" y="208" width="14.40" height="5.40" fill="none" stroke="#999999" stroke-width="1.1"/><path d="M1468.600 219h9.600M1472.400 215.600l-3.800 3.400 3.800 3.400" fill="none" stroke="#999999" stroke-width="1.800"/><path d="M1523.400 201.400V223.400" stroke="#999999" stroke-width="1.100"/><rect x="1512.6" y="201.8" width="9.00" height="3.60" fill="none" stroke="#999999" stroke-width="1.1"/><rect x="1507.4" y="208" width="14.20" height="5.40" fill="none" stroke="#999999" stroke-width="1.1"/><path d="M1511.600 219h9.600M1517.400 215.600l3.800 3.400-3.800 3.400" fill="none" stroke="#999999" stroke-width="1.800"/><path d="M1545.600 211.400H1570.400" stroke="#999999" stroke-width="1.100"/><rect x="1548.4" y="206.8" width="4.00" height="9.60" fill="#666666" stroke="#999999" stroke-width="1.1"/><rect x="1555.4" y="204.4" width="5.60" height="14.00" fill="#666666" stroke="#999999" stroke-width="1.1"/><rect x="1564.4" y="208.8" width="4.20" height="5.60" fill="#666666" stroke="#999999" stroke-width="1.1"/><path d="M1601.700 200.800V222" stroke="#999999" stroke-width="1.100"/><rect x="1598.8" y="201.4" width="5.80" height="3.60" fill="#666666" stroke="#999999" stroke-width="1.1"/><rect x="1594.4" y="208.4" width="14.20" height="6.00" fill="#666666" stroke="#999999" stroke-width="1.1"/><rect x="1596.4" y="217.4" width="10.20" height="4.20" fill="#666666" stroke="#999999" stroke-width="1.1"/><rect x="1633.6" y="201.4" width="14.60" height="10.20" fill="none" stroke="#999999" stroke-width="1.1"/><path d="M1636 209.600l3.400-4 2.600 2.800 1.400-1.400 2.400 2.600z" fill="#999999"/><rect x="1643.4" y="209.8" width="13.40" height="12.80" fill="#666666" stroke="#999999" stroke-width="1.1"/><path d="M1645.400 220.800l3.600-5 2.600 3 1.600-1.600 2.400 3.600z" fill="#999999"/><circle cx="1653" cy="213.400" r="1.200" fill="#999999"/><path d="M1636 214c-1.600 2.600-0.600 6 2.800 7.200h3" fill="none" stroke="#999999" stroke-width="1.800"/><path d="M1640.800 218.400l3.800 2.800-3.800 2.800z" fill="#999999"/><path d="M1677 203.400H1699" stroke="#999999" stroke-width="1.100"/><rect x="1677.6" y="205.4" width="4.00" height="9.00" fill="none" stroke="#999999" stroke-width="1.1"/><rect x="1683.8" y="205.4" width="5.60" height="15.00" fill="none" stroke="#999999" stroke-width="1.1"/><path d="M1695.800 216.400v-9M1692.400 210.800l3.400-3.600 3.400 3.600" fill="none" stroke="#999999" stroke-width="1.800"/></svg><div id="slide"></div><span class="lt" style="left:19.40px;top:261.02px;font-size:23.5px;color:#fff;font-weight:normal;font-style:normal;font-family:'Liberation Sans',sans-serif;-webkit-text-stroke:0.35px #fff;">1</span><span class="lt" style="left:20.40px;top:321.02px;font-size:23.5px;color:#fff;font-weight:normal;font-style:normal;font-family:'Liberation Sans',sans-serif;-webkit-text-stroke:0.35px #fff;">2</span><span class="lt" style="left:20.40px;top:381.02px;font-size:23.5px;color:#fff;font-weight:normal;font-style:normal;font-family:'Liberation Sans',sans-serif;-webkit-text-stroke:0.35px #fff;">3</span><span class="lt" style="left:20.40px;top:441.02px;font-size:23.5px;color:#fff;font-weight:normal;font-style:normal;font-family:'Liberation Sans',sans-serif;-webkit-text-stroke:0.35px #fff;">4</span><span class="lt" style="left:20.40px;top:501.02px;font-size:23.5px;color:#fff;font-weight:normal;font-style:normal;font-family:'Liberation Sans',sans-serif;-webkit-text-stroke:0.35px #fff;">5</span><span class="lt" style="left:20.40px;top:561.02px;font-size:23.5px;color:#fff;font-weight:normal;font-style:normal;font-family:'Liberation Sans',sans-serif;-webkit-text-stroke:0.35px #fff;">6</span><span class="lt" style="left:20.40px;top:621.02px;font-size:23.5px;color:#fff;font-weight:normal;font-style:normal;font-family:'Liberation Sans',sans-serif;-webkit-text-stroke:0.35px #fff;">7</span><span class="lt" style="left:20.40px;top:681.02px;font-size:23.5px;color:#fff;font-weight:normal;font-style:normal;font-family:'Liberation Sans',sans-serif;-webkit-text-stroke:0.35px #fff;">8</span><svg class="layer " width="1725" height="918" viewBox="0 0 1725 918"><path d="M137.500 238.500V882" stroke="#a6a6a6" stroke-width="1"/><path d="M137 882.500H1725" stroke="#9c9c9c" stroke-width="1"/><rect x="55.500" y="265.5" width="51" height="30" fill="#fff" stroke="#2b2b2b" stroke-width="1"/><rect x="55.500" y="325.5" width="51" height="30" fill="#fff" stroke="#2b2b2b" stroke-width="1"/><rect x="55.500" y="385.5" width="51" height="30" fill="#fff" stroke="#2b2b2b" stroke-width="1"/><rect x="55.500" y="445.5" width="51" height="30" fill="#fff" stroke="#2b2b2b" stroke-width="1"/><rect x="55.500" y="505.5" width="51" height="30" fill="#fff" stroke="#2b2b2b" stroke-width="1"/><rect x="55.500" y="565.5" width="51" height="30" fill="#fff" stroke="#2b2b2b" stroke-width="1"/><rect x="54.500" y="624.5" width="53" height="32" fill="#fff" stroke="#c43e1c" stroke-width="2.600"/><rect x="55.500" y="685.5" width="51" height="30" fill="#fff" stroke="#2b2b2b" stroke-width="1"/><path d="M75.98 284.90A5.8 5.8 0 0 1 82.98 276.55" fill="none" stroke="#58a8aa" stroke-width="2.9"/><path d="M83.45 276.74A5.8 5.8 0 0 1 85.44 285.73" fill="none" stroke="#e6c65a" stroke-width="2.9"/><path d="M85.10 286.10A5.8 5.8 0 0 1 80.49 287.78" fill="none" stroke="#c9733a" stroke-width="2.9"/><path d="M79.99 287.71A5.8 5.8 0 0 1 76.25 285.33" fill="none" stroke="#a08c82" stroke-width="2.9"/><path d="M76.400 269.400h11" stroke="#b8b8b8" stroke-width="0.800"/><path d="M61.400 275.4h11" stroke="#b9c6cf" stroke-width="1.200"/><path d="M90.400 275.4h11" stroke="#c3cfb9" stroke-width="1.200"/><path d="M61.400 282.4h11" stroke="#b9c6cf" stroke-width="1.200"/><path d="M90.400 282.4h11" stroke="#c3cfb9" stroke-width="1.200"/><path d="M61.400 289.6h11" stroke="#b9c6cf" stroke-width="1.200"/><path d="M90.400 289.6h11" stroke="#c3cfb9" stroke-width="1.200"/><rect x="75.200" y="336" width="11.800" height="8.800" fill="#3f3f3f"/><path d="M76.400 329.400h11" stroke="#b8b8b8" stroke-width="0.800"/><rect x="62" y="393.400" width="10" height="2.600" fill="#4aa39a"/><path d="M77.600 394.600h8M91 394.600h9" stroke="#777" stroke-width="1"/><rect x="61.8" y="398" width="11.400" height="10" fill="#e4e4e4"/><path d="M61.8 402.600h11.400" stroke="#666" stroke-width="0.900"/><path d="M62.8 406h9.400" stroke="#aaa" stroke-width="0.700"/><rect x="75.2" y="398" width="11.400" height="10" fill="#e4e4e4"/><path d="M75.2 402.600h11.400" stroke="#666" stroke-width="0.900"/><path d="M76.2 406h9.400" stroke="#aaa" stroke-width="0.700"/><rect x="90" y="398" width="11.400" height="10" fill="#e4e4e4"/><path d="M90 402.600h11.400" stroke="#666" stroke-width="0.900"/><path d="M91 406h9.400" stroke="#aaa" stroke-width="0.700"/><rect x="62.5" y="455.3" width="3.400" height="3.400" rx="1" fill="#4aa39a"/><rect x="74.3" y="454.90000000000003" width="3.400" height="3.400" rx="1" fill="#4aa39a"/><rect x="85.5" y="455.3" width="3.400" height="3.400" rx="1" fill="#4aa39a"/><rect x="97.3" y="456.5" width="3.400" height="3.400" rx="1" fill="#4aa39a"/><path d="M62.400 511.400h13" stroke="#d4e6e4" stroke-width="0.900"/><path d="M62 515.400h13" stroke="#76b4ae" stroke-width="1.100"/><path d="M63 519.400h10" stroke="#e0ecea" stroke-width="0.900"/><path d="M74.400 522.200h18" stroke="#ececec" stroke-width="1"/><rect x="70.600" y="579" width="21" height="2.900" rx="0.800" fill="#6a6a6a"/><path d="M1505.400 738.600V761.400L1510.600 757L1514.100 764.200L1518 762.600L1515.600 756.400L1522.200 756.100Z" fill="#fff" stroke="#111" stroke-width="1.100" stroke-linejoin="miter"/></svg><svg class="cj " role="img" aria-label="幻灯片" style="left:8.36px;top:892.37px;width:54.00px;height:18px;fill:#ffffff;stroke:#ffffff;stroke-width:20" viewBox="0 -880 3000 1000"><text x="0" y="0">幻灯片</text></svg><svg class="cj " role="img" aria-label="第" style="left:67.87px;top:892.44px;width:18.00px;height:18px;fill:#ffffff;stroke:#ffffff;stroke-width:20" viewBox="0 -880 1000 1000"><text x="0" y="0">第</text></svg><span class="lt" style="left:92.60px;top:892.56px;font-size:18.5px;color:#ffffff;font-weight:normal;font-style:normal;font-family:'Liberation Sans',sans-serif;">7</span><svg class="cj " role="img" aria-label="张，共" style="left:105.12px;top:892.27px;width:54.00px;height:18px;fill:#ffffff;stroke:#ffffff;stroke-width:20" viewBox="0 -880 3000 1000"><text x="0" y="0">张，共</text></svg><span class="lt" style="left:165.60px;top:892.56px;font-size:18.5px;color:#ffffff;font-weight:normal;font-style:normal;font-family:'Liberation Sans',sans-serif;">8</span><svg class="cj " role="img" aria-label="张" style="left:180.42px;top:892.17px;width:18.00px;height:18px;fill:#ffffff;stroke:#ffffff;stroke-width:20" viewBox="0 -880 1000 1000"><text x="0" y="0">张</text></svg><svg class="cj " role="img" aria-label="备注" style="left:1120.46px;top:891.94px;width:36.00px;height:18px;fill:#ffffff;stroke:#ffffff;stroke-width:20" viewBox="0 -880 2000 1000"><text x="0" y="0">备注</text></svg><svg class="cj " role="img" aria-label="批注" style="left:1203.39px;top:892.01px;width:36.00px;height:18px;fill:#ffffff;stroke:#ffffff;stroke-width:20" viewBox="0 -880 2000 1000"><text x="0" y="0">批注</text></svg><span class="lt" style="left:1644.60px;top:891.92px;font-size:19px;color:#ffffff;font-weight:normal;font-style:normal;font-family:'Liberation Sans',sans-serif;letter-spacing:-0.5px;">50%</span><svg class="layer " width="1725" height="918" viewBox="0 0 1725 918"><path d="M0 885.500H1725" stroke="#4c4c4c" stroke-width="1"/><path d="M1102.60 897.40h7.4l-3.70 -3.8z" fill="#fff"/><path d="M1097.600 900.800h17.400M1097.600 904.400h17.400M1097.600 908h8.600" stroke="#fff" stroke-width="1.100"/><path d="M1181 891.400h17.800a2 2 0 0 1 2 2v10.600a2 2 0 0 1-2 2h-8.800l-5.400 4.600v-4.600h-3.600a2 2 0 0 1-2-2v-10.600a2 2 0 0 1 2-2z" fill="#e8e8e8"/><rect x="1263.200" y="886" width="44.600" height="32" fill="#444444"/><path d="M0 883.700H1725" stroke="#6e6e6e" stroke-width="1.400"/><rect x="1276" y="892" width="19.200" height="18.200" fill="#f6f6f6"/><rect x="1282.400" y="893.300" width="11.300" height="10.200" fill="#444"/><rect x="1284.900" y="895.900" width="6.200" height="5" fill="#f6f6f6"/><rect x="1282.400" y="905.300" width="11.300" height="3.100" fill="#4a4a4a"/><rect x="1321" y="892" width="8.600" height="8" fill="#f1f1f1"/><rect x="1321" y="902" width="8.600" height="8" fill="#f1f1f1"/><rect x="1331.4" y="892" width="8.600" height="8" fill="#f1f1f1"/><rect x="1331.4" y="902" width="8.600" height="8" fill="#f1f1f1"/><path d="M1375.500 893.600c-2.400-1.200-5.600-1.400-9-1v15c3.400-0.400 6.600-0.200 9 1c2.400-1.200 5.600-1.400 9-1v-15c-3.400-0.400-6.600-0.200-9 1zM1375.500 893.600v15.600M1373.800 908.400l1.700 2 1.700-2" fill="none" stroke="#fff" stroke-width="1.300"/><path d="M1368.400 896.400h5M1368.400 899.400h5M1368.400 902.400h5M1368.400 905.400h5M1377.600 896.400h5M1377.600 899.400h5M1377.600 902.400h5M1377.600 905.400h5" stroke="#fff" stroke-width="1.100"/><path d="M1411.400 893h18.600" stroke="#fff" stroke-width="2"/><path d="M1413.600 893.400v10.200h14.200v-10.200M1420.700 903.600v6M1417.400 909.600h6.600M1416.600 897.400h8.200" fill="none" stroke="#fff" stroke-width="1.300"/><path d="M1449 900.800h11" stroke="#fff" stroke-width="2.200"/><path d="M1466 900.800h147.600" stroke="#fff" stroke-width="1.900"/><path d="M1540 897v8" stroke="#fff" stroke-width="1.900"/><rect x="1497" y="893.300" width="8" height="16.300" fill="#fff"/><path d="M1619.800 900.800h11.200M1625.400 895.200v11.200" stroke="#fff" stroke-width="2.200"/><rect x="1711.800" y="893" width="16" height="15.400" fill="none" stroke="#fff" stroke-width="1.300"/><path d="M1719.600 893v5M1719.600 908.400v-5M1711.800 900.700h5M1718 896.600l1.600 1.600 1.600-1.600M1718 904.800l1.600-1.600 1.600 1.600M1715.400 899.100l1.600 1.600-1.600 1.600M1724 899.100l-1.600 1.600 1.600 1.600M1725 900.700h-2.600" fill="none" stroke="#fff" stroke-width="1"/></svg>
</div>
</body></html>
